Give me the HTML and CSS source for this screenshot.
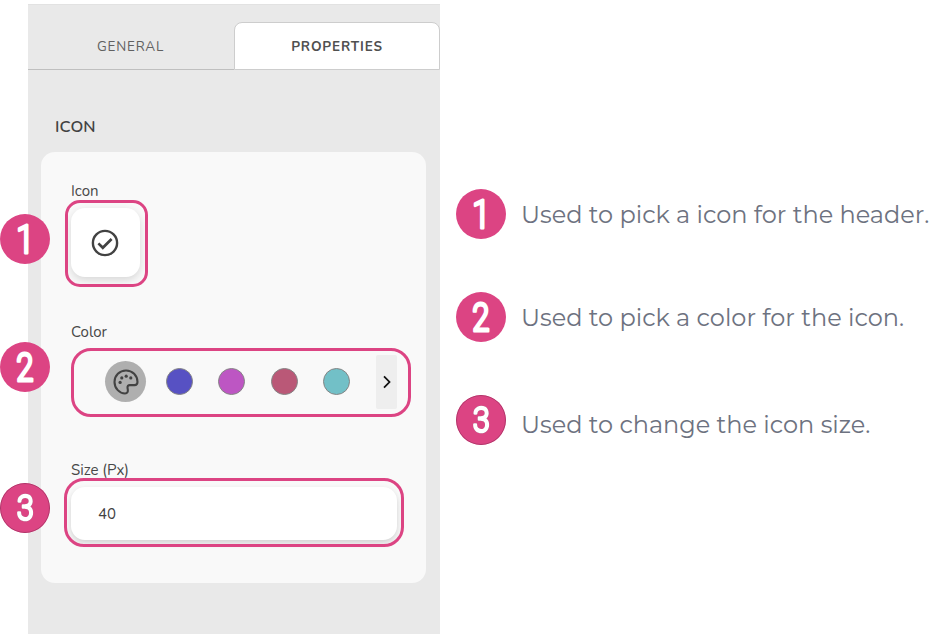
FILE: index.html
```
<!DOCTYPE html>
<html lang="en">
<head>
<meta charset="utf-8">
<title>Icon properties</title>
<link rel="stylesheet" href="styles.css">
</head>
<body>
<main class="page">
  <section class="panel">
    <nav class="tabs">
      <div class="tab"><span class="tab-general">GENERAL</span></div>
      <div class="tab tab-active"><span class="tab-properties">PROPERTIES</span></div>
    </nav>
    <h2 class="heading">ICON</h2>
    <div class="card">
      <div class="field field-icon">
        <label class="label label-icon">Icon</label>
        <div class="tile">
          <svg width="28" height="28" viewBox="0 0 28 28" fill="none" stroke="#424242"><circle cx="14" cy="14" r="12.1" stroke-width="2.4"/><path d="M7.4 14.4 11.8 18.8 20.6 10" stroke-width="2.7"/></svg>
        </div>
        <div class="frame frame-icon"></div>
        <svg class="badge badge-icon" viewBox="0 0 50 50"><text class="digit" transform="translate(25.300 38.500) scale(.85 1)">1</text></svg>
      </div>
      <div class="field field-color">
        <label class="label label-color">Color</label>
        <div class="swatches">
          <div class="palette">
            <svg width="26" height="26" viewBox="0 0 26 26"><path d="M13 1.500C6.600 1.500 1.500 6.600 1.500 13S6.600 24.500 12 24.500C14.500 24.500 15.100 22.600 14.800 20.600L14.500 18.700C14.400 17.100 15.200 16.100 16.800 16.100H21.500C23.500 16.100 24.500 15 24.500 13C24.500 6.600 19.400 1.500 13 1.500Z" fill="none" stroke="#424242" stroke-width="2.1"/><g fill="#424242"><circle cx="7.100" cy="13.400" r="1.600"/><circle cx="8.800" cy="8.900" r="1.600"/><circle cx="13.200" cy="7.200" r="1.600"/><circle cx="17.800" cy="8.900" r="1.600"/></g></svg>
          </div>
          <i class="swatch indigo"></i><i class="swatch orchid"></i><i class="swatch rose"></i><i class="swatch teal"></i>
          <div class="next"><svg width="8" height="14" viewBox="0 0 8 14"><path d="M1 1.300 6.500 7 1 12.700" fill="none" stroke="#111" stroke-width="1.800"/></svg></div>
        </div>
        <div class="frame frame-color"></div>
        <svg class="badge badge-color" viewBox="0 0 50 50"><text class="digit" transform="translate(25 38.500) scale(.82 1)">2</text></svg>
      </div>
      <div class="field field-size">
        <label class="label label-size">Size (Px)</label>
        <div class="input"><span>40</span></div>
        <div class="frame frame-size"></div>
        <svg class="badge badge-size" viewBox="0 0 50 50"><circle class="rim" cx="25" cy="25" r="24.500"/><text class="digit small shade" transform="translate(25.400 37.200) scale(.88 1)" aria-hidden="true">3</text></svg>
      </div>
    </div>
  </section>
  <section class="notes">
    <div class="note"><svg class="badge" viewBox="0 0 50 50"><text class="digit" transform="translate(25.300 38.500) scale(.85 1)">1</text></svg><p class="text">Used to pick a icon for the header.</p></div>
    <div class="note"><svg class="badge" viewBox="0 0 50 50"><text class="digit" transform="translate(25 38.500) scale(.82 1)">2</text></svg><p class="text">Used to pick a color for the icon.</p></div>
    <div class="note"><svg class="badge" viewBox="0 0 50 50"><circle class="rim" cx="25" cy="25" r="24.500"/><text class="digit small shade" transform="translate(25.400 37.200) scale(.88 1)">3</text></svg><p class="text text-3">Used to change the icon size.</p></div>
  </section>
</main>
</body>
</html>
```
FILE: styles.css
```
* { box-sizing: border-box; }
body { margin: 0; background: #fff; color: #424242; font-family: "Nunito", "Open Sans", sans-serif; overflow: hidden; }
.page { display: flex; height: 634px; padding: 4px 0 0 28px; }
.panel { width: 412px; height: 630px; background: #e9e9e9; border-top: 1px solid #e2e2e2; flex: none; }
.tabs { display: flex; height: 65px; padding-top: 17px; }
.tab { width: 206px; padding-top: 1px; display: flex; align-items: center; justify-content: center; border-bottom: 1px solid #bfbfbf; font-size: 13.500px; color: #606060; white-space: nowrap; }
.tab-active { background: #fff; border: 1px solid #cdcdcd; border-radius: 8px 8px 0 0; font-weight: 700; color: #505050; }
.tab-general { letter-spacing: .8px; padding: 1px 1px 0 0; }
.tab-properties { letter-spacing: .85px; }
.heading { margin: 47px 0 0 27px; font-size: 16.500px; line-height: 20px; font-weight: 650; letter-spacing: .1px; }
.card { margin: 15px 0 0 13px; width: 385px; height: 431px; border-radius: 14px; background: #f9f9f9; padding: 29px 0 0 30px; }
.field { position: relative; }
.field-icon { height: 141px; }
.field-color { height: 138px; }
.label { display: block; height: 20px; line-height: 20px; font-size: 15px; white-space: nowrap; color: #484848; }
.tile { margin-top: 7px; width: 69px; height: 69px; padding-right: 2px; border-radius: 14px; background: #fff; box-shadow: 0 3px 8px #00000024; display: flex; align-items: center; justify-content: center; }
.frame { position: absolute; border: 3px solid #dc4483; pointer-events: none; }
.frame-icon { left: -6px; top: 19px; width: 83px; height: 87px; border-radius: 15px; }
.frame-color { left: 0; top: 26px; width: 340px; height: 69px; border-radius: 20px; }
.frame-size { left: -7px; top: 18px; width: 340px; height: 69px; border-radius: 20px; }
.badge { display: block; width: 50px; height: 50px; border-radius: 50%; background: #dc4483; flex: none; }
.field .badge { position: absolute; left: -71px; }
.badge-icon { top: 33px; }
.badge-color { top: 20px; }
.badge-size { top: 23px; }
.rim { fill: none; stroke: #ad3a6b; stroke-width: 1; }
.digit { font-family: Roboto, sans-serif; font-size: 38px; font-weight: 300; text-anchor: middle; fill: #fff; stroke: #fff; stroke-width: 3; stroke-linejoin: round; }
.small { font-size: 35px; stroke-width: 2.600; }
.shade { filter: drop-shadow(0 0 .7px #7f2750); }
.swatches { display: flex; align-items: center; width: 326px; height: 54px; margin-top: 13px; padding-left: 34px; }
.palette { width: 41px; height: 41px; border-radius: 50%; background: #afafaf; display: flex; align-items: center; justify-content: center; margin-right: 20px; }
.swatch { width: 27px; height: 27px; border: 1px solid #858585; border-radius: 50%; margin-right: 25.300px; }
.palette, .swatch { margin-bottom: 1px; }
.indigo { background: #5751c3; }
.orchid { background: #bd56c3; }
.rose { background: #ba5877; }
.teal { background: #72c0c7; }
.next { margin-left: auto; width: 21px; height: 54px; border-radius: 2px; background: #eee; display: flex; align-items: center; justify-content: center; }
.input { margin-top: 7px; width: 326px; height: 53px; border-radius: 14px; background: #fff; box-shadow: 0 3px 6px #00000029; padding-left: 27px; line-height: 55px; font-size: 15px; }
.notes { padding: 185px 0 0 16px; display: flex; flex-direction: column; gap: 53px; }
.note { display: flex; gap: 15px; height: 50px; }
.text { margin: 10px 0 0; line-height: 32px; font-family: "Montserrat", Inter, sans-serif; font-weight: 400; font-size: 24px; color: #6d7280; white-space: nowrap; }
.text-3 { margin-top: 14px; }
```
